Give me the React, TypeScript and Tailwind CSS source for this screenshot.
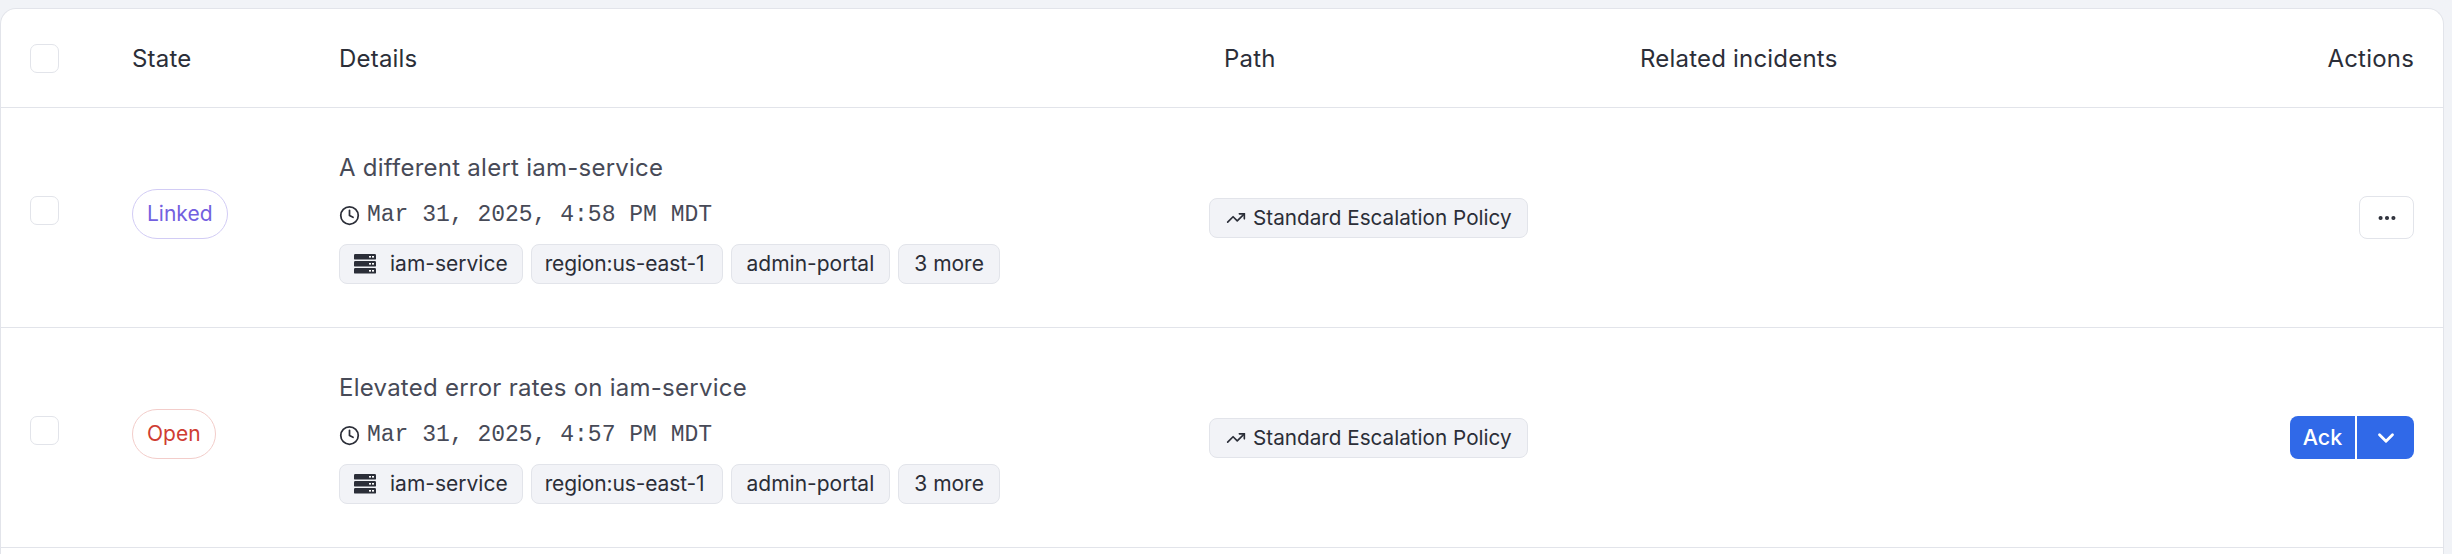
import React from 'react';
import { ChevronDown, Clock, Ellipsis, TrendingUp } from 'lucide-react';

interface AlertRow {
  title: string;
  time: string;
  state: string;
  stateClass: string;
}

const alerts: AlertRow[] = [
  {
    title: 'A different alert iam-service',
    time: 'Mar 31, 2025, 4:58 PM MDT',
    state: 'Linked',
    stateClass: 'text-[#7360e0] border-[#d2ccf5]',
  },
  {
    title: 'Elevated error rates on iam-service',
    time: 'Mar 31, 2025, 4:57 PM MDT',
    state: 'Open',
    stateClass: 'text-[#cf3d33] border-[#f3cdca]',
  },
];

const columns = 'grid grid-cols-[131px_207px_870px_432px_1fr] items-center pr-[29px]';

function Checkbox() {
  return <div className="w-[29px] h-[29px] ml-[29px] rounded-[7px] border border-[#e2e4ea] bg-white" />;
}

function ServerIcon() {
  return (
    <svg width="22" height="20" viewBox="0 0 22 20" className="text-[#2b2e38]">
      <rect x="0" y="0" width="22" height="5.6" rx="1.2" fill="currentColor" />
      <rect x="0" y="7" width="22" height="5.6" rx="1.2" fill="currentColor" />
      <rect x="0" y="14" width="22" height="5.6" rx="1.2" fill="currentColor" />
      <rect x="15" y="2" width="2" height="1.6" fill="white" />
      <rect x="18" y="2" width="2" height="1.6" fill="white" />
      <rect x="15" y="9" width="2" height="1.6" fill="white" />
      <rect x="18" y="9" width="2" height="1.6" fill="white" />
      <rect x="15" y="16" width="2" height="1.6" fill="white" />
      <rect x="18" y="16" width="2" height="1.6" fill="white" />
    </svg>
  );
}

function Tag({ children, className }: { children: React.ReactNode; className?: string }) {
  return (
    <span className={`inline-flex items-center h-10 rounded-lg border border-[#e2e4ea] bg-[#f2f3f7] text-[#2b2e38] ${className ?? ''}`}>
      {children}
    </span>
  );
}

export default function App() {
  return (
    <div className="h-[554px] overflow-hidden bg-[#f1f3f7] pt-2 pr-2 font-['Inter',sans-serif]">
      <div className="h-[546px] bg-white rounded-t-2xl border-t border-x border-[#e2e4ea]">
        {/* Header */}
        <div className={`${columns} h-[99px] border-b border-[#e2e4ea] text-[24px] tracking-[0.2px] text-[#2b2e38]`}>
          <Checkbox />
          <div className="pt-[2px]">State</div>
          <div className="pt-[2px]">Details</div>
          <div className="pl-[15px] pt-[2px]">Path</div>
          <div className="flex items-center justify-between pt-[2px] -ml-px">
            <span>Related incidents</span>
            <span>Actions</span>
          </div>
        </div>

        {/* Rows */}
        {alerts.map((alert) => (
          <div key={alert.title} className={`${columns} h-[220px] border-b border-[#e2e4ea]`}>
            <div className="-mt-[14px]">
              <Checkbox />
            </div>
            <div className="flex -mt-[7px]">
              <span className={`inline-flex items-center h-[50px] px-[14px] rounded-full border text-[21px] ${alert.stateClass}`}>
                {alert.state}
              </span>
            </div>
            <div className="flex flex-col items-start mt-[2px]">
              <div className="text-[24px] leading-[30px] tracking-[0.25px] text-[#474a57]">{alert.title}</div>
              <div className="flex items-center gap-[7px] mt-[18px] text-[#474a57]">
                <Clock size={21} strokeWidth={2} className="text-[#2b2e38]" />
                <span className="font-['Liberation_Mono',monospace] text-[23px] leading-[28px]">{alert.time}</span>
              </div>
              <div className="flex items-center gap-2 mt-[15px] text-[21px]">
                <Tag className="px-[14px] gap-[14px]">
                  <ServerIcon />
                  iam-service
                </Tag>
                <Tag className="pl-[13px] pr-[17px] tracking-[-0.13px]">region:us-east-1</Tag>
                <Tag className="px-[15px]">admin-portal</Tag>
                <Tag className="px-[15px]">3 more</Tag>
              </div>
            </div>
            <div className="flex text-[20.7px]">
              <Tag className="pl-[16px] pr-[15px] gap-[7px]">
                <TrendingUp size={20} />
                Standard Escalation Policy
              </Tag>
            </div>
            <div className="flex justify-end">
              {alert.state === 'Open' ? (
                <div className="flex h-[43px] rounded-lg overflow-hidden bg-[#3069e8] text-white text-[21.5px] font-medium">
                  <span className="flex items-center justify-center w-[67px] border-r-2 border-white">Ack</span>
                  <span className="flex items-center justify-center w-[57px]">
                    <ChevronDown size={26} strokeWidth={2.6} />
                  </span>
                </div>
              ) : (
                <button className="flex items-center justify-center w-[55px] h-[43px] rounded-lg border border-[#e2e4ea] bg-white text-[#2b2e38]">
                  <Ellipsis size={22} strokeWidth={2.5} />
                </button>
              )}
            </div>
          </div>
        ))}
      </div>
    </div>
  );
}
